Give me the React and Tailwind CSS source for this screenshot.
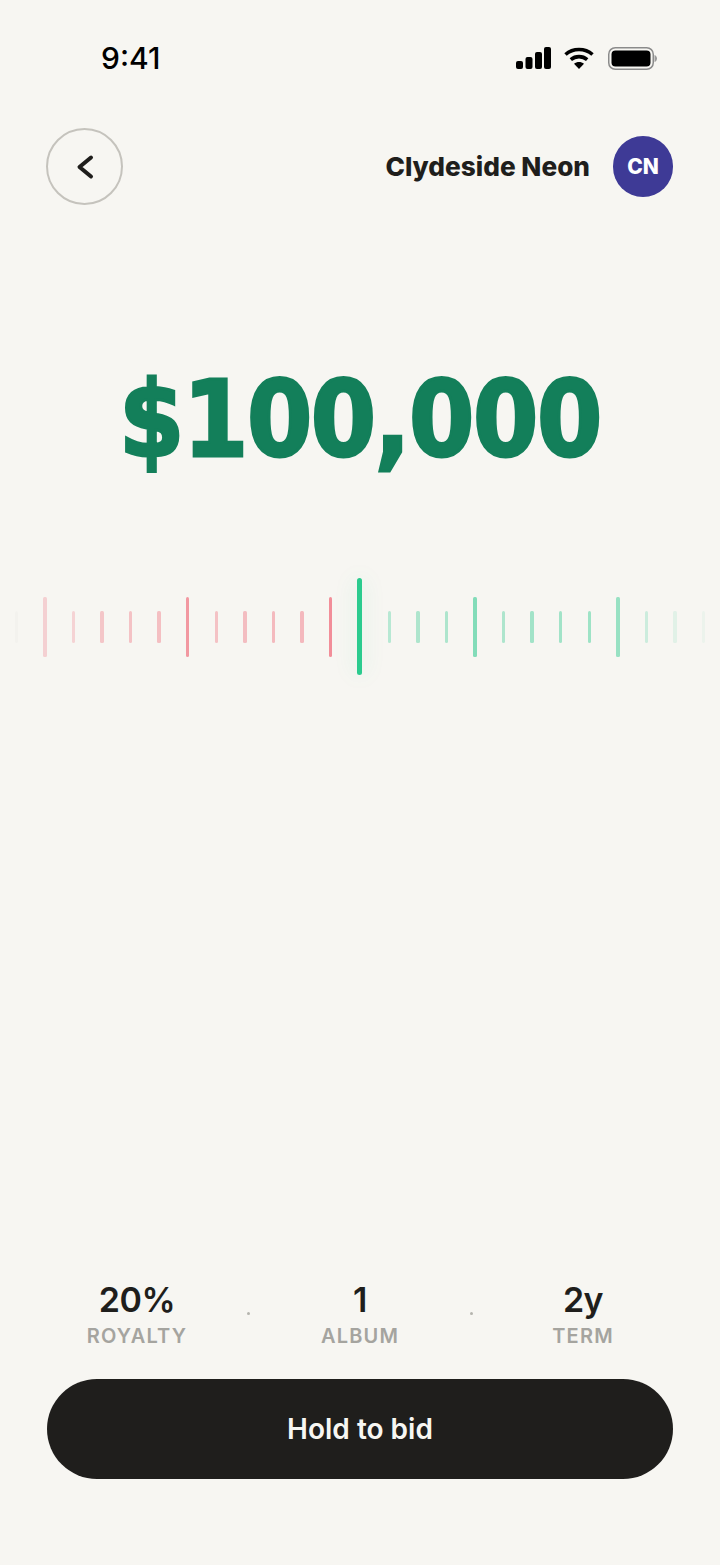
const ticks = [
  ["g", 0.05, 0], ["r", 0.22, 1], ["r", 0.2, 0], ["r", 0.28, 0], ["r", 0.3, 0], ["r", 0.32, 0], ["r", 0.55, 1],
  ["r", 0.3, 0], ["r", 0.33, 0], ["r", 0.35, 0], ["r", 0.36, 0], ["r", 0.6, 1], ["m", 1, 2],
  ["e", 0.3, 0], ["e", 0.35, 0], ["e", 0.35, 0], ["e", 0.55, 1], ["e", 0.35, 0], ["e", 0.4, 0], ["e", 0.4, 0], ["e", 0.42, 0], ["e", 0.45, 1],
  ["e", 0.2, 0], ["e", 0.1, 0], ["e", 0.05, 0],
];
const colors = { g: "#b8b8b0", r: "#ee4a5e", e: "#24c78a", m: "#2bcb8e" };

function Tick({ kind, op, size }) {
  const cls = size === 2
    ? "w-[5px] h-[97px] rounded-[3px] shadow-[0_0_22px_rgba(38,201,139,0.18)]"
    : size === 1 ? "w-[3.5px] h-[60px] rounded-[1.5px]" : "w-[3.5px] h-[32px] rounded-[1.5px]";
  return <div className={cls} style={{ backgroundColor: colors[kind], opacity: op }} />;
}

function Stat({ value, label }) {
  return (
    <div className="w-[120px] flex flex-col items-center">
      <div className="text-[34px] leading-[36px] font-semibold text-[#1f1e1c] tracking-[-0.5px]">{value}</div>
      <div className="mt-[7px] text-[20px] leading-[22px] font-semibold text-[#a5a49f] tracking-[1.2px]">{label}</div>
    </div>
  );
}

export default function App() {
  return (
    <div className="w-[720px] h-[1565px] bg-[#f7f6f2] flex flex-col overflow-hidden font-['Inter','Liberation_Sans',sans-serif]">
      <div className="h-[46px] mt-[35px] pl-[101px] pr-[63px] flex items-center justify-between">
        <div className="text-[30px] leading-[46px] font-medium text-black">9:41</div>
        <div className="flex items-center">
          <svg width="35" height="22" viewBox="0 0 35 22" fill="#000">
            <rect x="0" y="14" width="7" height="8" rx="2" />
            <rect x="9.5" y="10" width="7" height="12" rx="2" />
            <rect x="19" y="5" width="7" height="17" rx="2" />
            <rect x="28" y="0" width="7" height="22" rx="2" />
          </svg>
          <svg className="ml-[13px]" width="30" height="22" viewBox="0 0 30 22" fill="none" stroke="#000" strokeWidth="3.6">
            <path d="M1.5 7.5C9 .8 21 .8 28.5 7.5" />
            <path d="M6.8 12.6c4.7-4 11.7-4 16.4 0" />
            <path d="M15 22l-5-5.2c2.9-2.3 7.1-2.3 10 0z" fill="#000" stroke="none" />
          </svg>
          <svg className="ml-[14px]" width="49" height="23" viewBox="0 0 49 23">
            <rect x="0.75" y="0.75" width="44.5" height="21.5" rx="6.5" fill="none" stroke="#8b8b8b" strokeWidth="1.5" />
            <rect x="3.5" y="3.5" width="39" height="16" rx="4" fill="#000" />
            <path d="M46.5 8c1.6.5 2.5 2 2.5 3.5S48.100 14.500 46.500 15z" fill="#9a9a9a" />
          </svg>
        </div>
      </div>

      <div className="mt-[47px] pl-[46px] pr-[47px] flex items-center justify-between">
        <div className="w-[77px] h-[77px] rounded-full border-[2.5px] border-[#c5c3bd] flex items-center justify-center">
          <svg width="24" height="28" viewBox="0 0 24 28" fill="none" stroke="#1f1e1c" strokeWidth="4" strokeLinecap="round" strokeLinejoin="round" className="mr-[2px]">
            <path d="M19 4.500L7.500 14l11.500 9.500" />
          </svg>
        </div>
        <div className="flex items-center gap-[23px]">
          <div className="text-[26.2px] leading-[32px] font-extrabold text-[#1f1e1c]">Clydeside Neon</div>
          <div className="w-[60px] h-[61px] rounded-full bg-[#3e3a96] flex items-center justify-center text-white text-[21px] font-extrabold">CN</div>
        </div>
      </div>

      <div className="mt-[160px] h-[110px] flex items-center justify-center font-['DejaVu_Sans',sans-serif] text-[105px] leading-[110px] font-bold tracking-[-1.6px] text-[#137f5a] scale-x-[0.895] [-webkit-text-stroke:3px_#137f5a]">
        $100,000
      </div>

      <div className="mt-[103px] h-[97px] px-[14.5px] flex items-center justify-between">
        {ticks.map((t, i) => <Tick key={i} kind={t[0]} op={t[1]} size={t[2]} />)}
      </div>

      <div className="flex-1" />

      <div className="px-[77px] flex items-center justify-between">
        <Stat value="20%" label="ROYALTY" />
        <div className="w-[3px] h-[3px] rounded-full bg-[#b5b4ae] mb-[3px]" />
        <Stat value="1" label="ALBUM" />
        <div className="w-[3px] h-[3px] rounded-full bg-[#b5b4ae] mb-[3px]" />
        <Stat value="2y" label="TERM" />
      </div>

      <div className="mt-[32px] mb-[86px] ml-[47px] mr-[47px] h-[100px] rounded-[50px] bg-[#1f1e1c] flex items-center justify-center text-[#f7f6f2] text-[28px] font-semibold">
        Hold to bid
      </div>
    </div>
  );
}
